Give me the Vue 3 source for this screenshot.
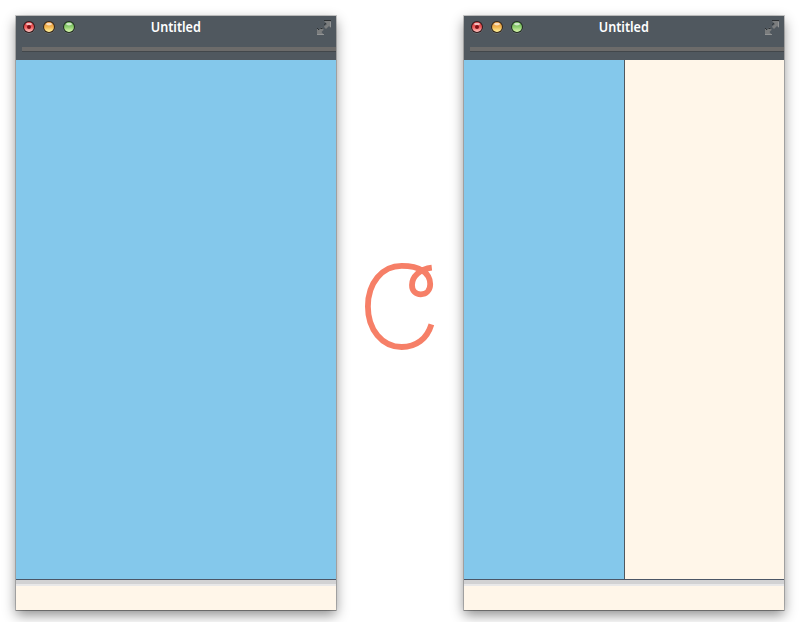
<script setup>
const windows = [
  { id: 'single', title: 'Untitled', split: false },
  { id: 'split', title: 'Untitled', split: true },
]
const lights = [
  { name: 'red', rim: '#33171a', dark: '#cf3a3c', mid: '#f0595a', light: '#ffc4c0' },
  { name: 'amber', rim: '#352718', dark: '#e0913c', mid: '#f3b550', light: '#fff39a' },
  { name: 'green', rim: '#1f2e20', dark: '#66ab50', mid: '#8fcf70', light: '#d9f7ac' },
]
</script>

<template>
  <main class="stage">
    <section v-for="win in windows" :key="win.id" class="window" :class="win.id">
      <header class="titlebar">
        <svg class="lights" width="60" height="18" viewBox="0 0 60 18">
          <defs>
            <linearGradient v-for="l in lights" :id="win.id + l.name" :key="l.name" x1="0" y1="0" x2="0" y2="1">
              <stop offset="0" :stop-color="l.dark" />
              <stop offset=".5" :stop-color="l.mid" />
              <stop offset="1" :stop-color="l.light" />
            </linearGradient>
          </defs>
          <g v-for="(l, i) in lights" :key="l.name" :transform="`translate(${9 + i * 20} 9)`">
            <circle cy=".6" r="6.2" fill="#697076" />
            <circle r="6" :fill="l.rim" />
            <circle r="4.9" :fill="`url(#${win.id + l.name})`" />
            <ellipse cy="-2.9" rx="3" ry="1.4" fill="#fff" opacity=".65" />
            <circle v-if="i === 0" r="2" fill="#7d1015" />
          </g>
        </svg>
        <span class="title"><span class="label">{{ win.title }}</span></span>
        <svg class="expand" width="16" height="16" viewBox="0 0 16 16">
          <path d="M8 1h7v7l-2-2-3 3-2.2-2.2L11 4zM1 8l2 2 2.500-2.500 2.300 2.300L5.500 12 8 15H1z" fill="#7b7d7e" />
          <path d="M8 .5h7M1 8l2 2M4.500 8.500h2M8 4.500l2-1" fill="none" stroke="#2c3033" />
          <path d="M1 14.500h7M14.500 2v5" fill="none" stroke="#989a9b" stroke-width=".8" />
        </svg>
      </header>
      <div class="toolbar"><div class="groove"></div></div>
      <div class="panes">
        <div class="pane blue"></div>
        <div v-if="win.split" class="pane cream"></div>
      </div>
      <footer class="footer"></footer>
    </section>
    <svg class="logo" width="80" height="96" viewBox="360 258 80 96">
      <path d="M431.400 324.300C427 339 416 347 401.700 347C382 347 367.900 329.500 367.900 306.500C367.900 283 382 265.900 401.700 265.900C420 265.900 430.200 273 430.200 284C430.200 290 426.500 294.300 420.800 294.300C415.500 294.300 412 290.800 412 285C412 276.500 420 269 431.800 267.700" fill="none" stroke="#f67f67" stroke-width="5.800" />
    </svg>
  </main>
</template>

<style>
body {
  margin: 0;
  background: #fff;
}
</style>

<style scoped>
.stage {
  box-sizing: border-box;
  width: 800px;
  height: 622px;
  padding: 16px 16px 12px;
  display: flex;
  justify-content: space-between;
  overflow: hidden;
}
.window {
  width: 320px;
  height: 594px;
  display: flex;
  flex-direction: column;
  background: #fff6e9;
  box-shadow: 0 0 0 1px rgba(0, 0, 0, .2), 0 1px 0 0 rgba(0, 0, 0, .2), 0 5px 12px rgba(0, 0, 0, .45);
}
.window.single {
  order: 0;
}
.logo {
  order: 1;
  margin-top: 242px;
}
.window.split {
  order: 2;
}
.titlebar {
  height: 31px;
  display: grid;
  grid-template-columns: 64px 1fr 64px;
  background: #50585f;
}
.lights {
  margin: 2px 0 0 4px;
}
.title {
  text-align: center;
  font: 600 14px/22px "Noto Sans", "Open Sans", sans-serif;
  color: #fff;
}
.label {
  display: inline-block;
  transform: scaleX(.9);
}
.expand {
  justify-self: end;
  margin: 4px 4px 0 0;
}
.toolbar {
  box-sizing: border-box;
  height: 13px;
  padding-left: 6px;
  background: #50585f;
}
.groove {
  height: 4px;
  background: #6c6b6a;
  border-bottom: 1px solid #42474b;
}
.panes {
  height: 519px;
  display: flex;
  border-bottom: 1px solid #4c5666;
}
.pane {
  flex: 1;
}
.blue {
  background: #84c8eb;
}
.cream {
  flex: 0 0 159px;
  border-left: 1px solid #50585f;
}
.footer {
  flex: 1;
  background: linear-gradient(#d2d2d3 0 4px, #e9e8e8 4px 6px, #fff6e9 6px);
}
</style>
